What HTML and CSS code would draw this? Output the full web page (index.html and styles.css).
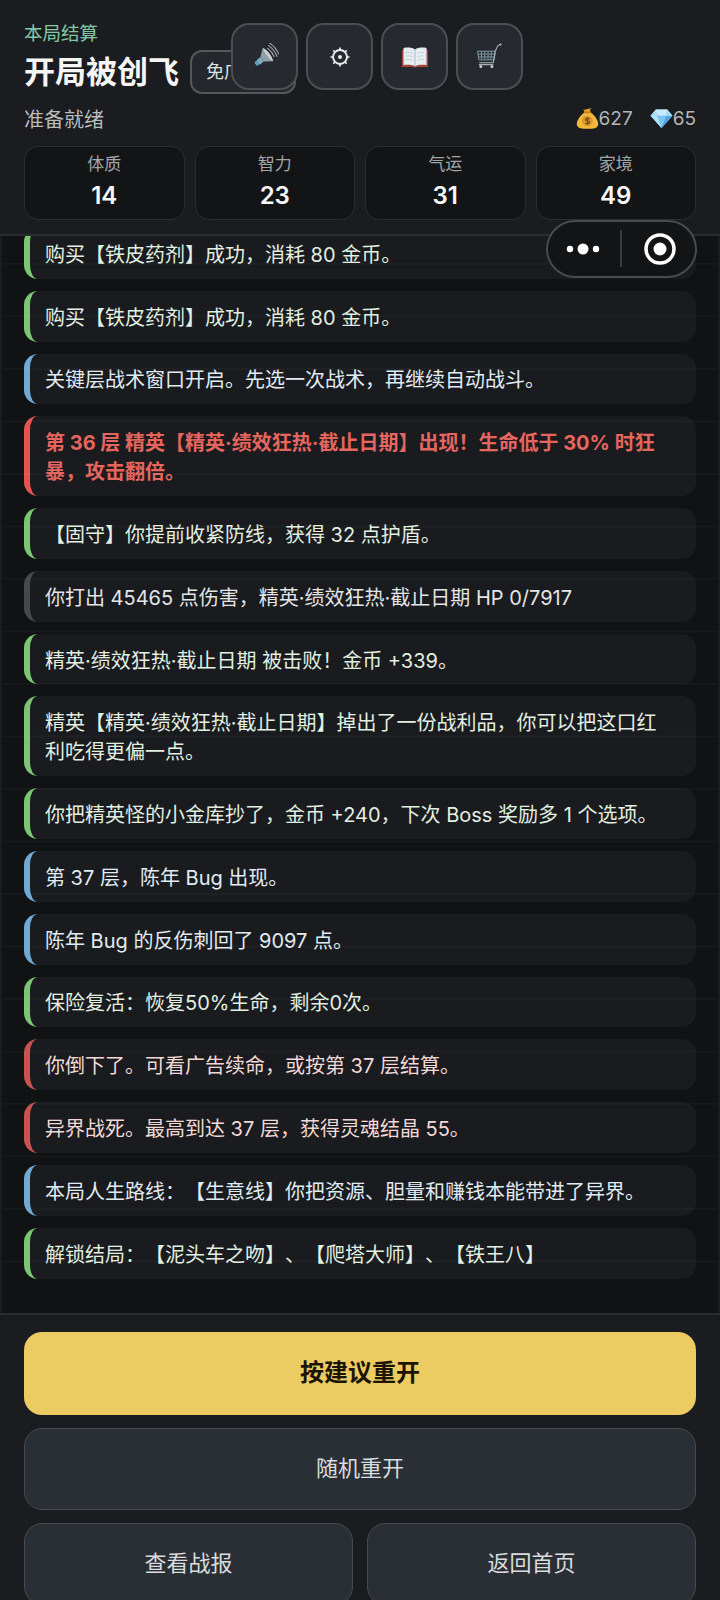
FILE: index.html
```html
<!DOCTYPE html>
<html lang="zh-CN">
<head>
    <meta charset="UTF-8">
    <meta name="viewport" content="width=device-width, initial-scale=1.0">
    <title>本局结算</title>
    <link rel="stylesheet" href="styles.css">
</head>
<body>
<div class="page">

    <header class="top">
        <div class="eyebrow">本局结算</div>
        <div class="title-row">
            <h1 class="title">开局被创飞</h1>
            <span class="badge">免广告券</span>
        </div>
        <div class="status-row">
            <span class="status">准备就绪</span>
            <div class="wallet">
                <span class="coin">
                    <svg width="23" height="23" viewBox="0 0 24 24">
                        <path d="M9 5.500 7.600 2.600c1.600.7 2.600.4 4-.4 1.200-.7 2.600-.7 4.800-.6l-2 1.400L15 5.600z" fill="#e8a52c"/>
                        <path d="M9.200 5.400c-4 2.600-8.400 8-8.400 12.200 0 3.600 3 5 6.600 5h9.400c3.600 0 6.400-1.400 6.400-5 0-4.200-4.400-9.600-8.400-12.200z" fill="#f0b93a"/>
                        <path d="M8.800 5.600h6.400" stroke="#c07f1e" stroke-width="1.600" stroke-linecap="round"/>
                        <circle cx="11.800" cy="14.600" r="5.600" fill="#d9962a"/>
                        <path d="M14 12.600c-.6-.9-3.800-1.200-4 .6-.2 2 4.400 1 4.200 3-.2 1.600-3.600 1.400-4.400.4M12 10.600v8" fill="none" stroke="#7a4a14" stroke-width="1.300"/>
                    </svg>
                </span><span class="num">627</span>
                <span class="coin gem">
                    <svg width="23" height="21" viewBox="0 0 24 22">
                        <path d="M6 1.500h12l5.500 6.500L12 21 .5 8z" fill="#8fd0f5"/>
                        <path d="M6 1.500h12L16.500 8h-9z" fill="#c9ecfc"/>
                        <path d="M.5 8h7L12 21z" fill="#b5e2fa"/>
                        <path d="M16.500 8h7L12 21z" fill="#4fa6e4"/>
                        <path d="M7.500 8h9L12 21z" fill="#7cc4f0"/>
                        <path d="M6 1.500 .5 8h7zM18 1.500 23.500 8h-7z" fill="#a9dcf8"/>
                    </svg>
                </span><span class="num">65</span>
            </div>
        </div>
        <div class="stats">
            <div class="stat"><span class="stat-label">体质</span><strong class="stat-value">14</strong></div>
            <div class="stat"><span class="stat-label">智力</span><strong class="stat-value">23</strong></div>
            <div class="stat"><span class="stat-label">气运</span><strong class="stat-value">31</strong></div>
            <div class="stat"><span class="stat-label">家境</span><strong class="stat-value">49</strong></div>
        </div>

        <!-- floating tool buttons sit on top of the title row -->
        <div class="tools">
            <button class="tool">
                <svg width="28" height="28" viewBox="0 0 30 30">
                    <g transform="rotate(-38 15 15)">
                        <path d="M3.500 12.500h4v5h-4a1.500 1.500 0 0 1-1-2.500 1.500 1.500 0 0 1 1-2.500z" fill="#5f9fb4"/>
                        <path d="M6 12h5v6H6z" fill="#7fabbc"/>
                        <path d="M11 12 19 6v18l-8-6z" fill="#8f9fa8"/>
                        <path d="M19 6c1.400 2 2 5.500 2 9s-.6 7-2 9c-1-2-1.400-5.500-1.400-9S18 8 19 6z" fill="#c9d0d4"/>
                        <g fill="none" stroke="#a9adb0" stroke-width="1.100" stroke-linecap="round">
                            <path d="M23 9.500c1 3.500 1 7.500 0 11"/>
                            <path d="M25.500 7.500c1.400 4.600 1.400 10.400 0 15"/>
                            <path d="M28 5.500c1.800 5.800 1.800 13.200 0 19"/>
                        </g>
                    </g>
                </svg>
            </button>
            <button class="tool">
                <svg width="22" height="22" viewBox="0 0 22 22">
                    <g stroke="#eceded" fill="none">
                        <circle cx="11" cy="11" r="7" stroke-width="1.900"/>
                        <path d="M11 1.500V4M11 18v2.500M1.500 11H4M18 11h2.500M4.300 4.300l1.700 1.700M16 16l1.700 1.700M4.300 17.700 6 16M16 6l1.700-1.700" stroke-width="1.700"/>
                    </g>
                    <circle cx="11" cy="11" r="2" fill="#eceded"/>
                </svg>
            </button>
            <button class="tool">
                <svg width="28" height="24" viewBox="0 0 28 24">
                    <path d="M1 5v17h11c1 .9 3 .9 4 0h11V5z" fill="#a5453c"/>
                    <path d="M2.500 3c4-.8 8.500-.6 11.500 1.500C17 2.400 21.500 2.200 25.500 3v17c-4-.6-8.500-.4-11.500 1.200C11 19.600 6.500 19.400 2.500 20z" fill="#e6edf1"/>
                    <path d="M14 4.500v16.700" stroke="#a9bcc9" stroke-width="1"/>
                    <path d="M5 7.500c2.500-.3 4.500 0 6.500.8M5 11c2.500-.3 4.500 0 6.500.8M5 14.500c2.500-.3 4.500 0 6.500.8M23 7.500c-2.500-.3-4.500 0-6.500.8M23 11c-2.500-.3-4.500 0-6.500.8M23 14.500c-2.500-.3-4.500 0-6.500.8" stroke="#c3d2dc" stroke-width="1" fill="none"/>
                </svg>
            </button>
            <button class="tool">
                <svg width="27" height="27" viewBox="0 0 28 28">
                    <g fill="none" stroke="#7f9aa5" stroke-width="1">
                        <path d="M1.500 8.500h18.500l-1.500 9H3z"/>
                        <path d="M2 11.500h17.500M2.500 14.500h16.500M5.500 8.500l.4 9M9 8.500l.2 9M12.500 8.500v9M16 8.500l-.5 9"/>
                    </g>
                    <path d="M20 8.500 22.500 3l3.500-1.800" fill="none" stroke="#a3b2b8" stroke-width="1.100"/>
                    <path d="M24.500 2l1.800-1" stroke="#d9a9a0" stroke-width="1.800"/>
                    <path d="M20 9 18 20.500H3.500" fill="none" stroke="#a9babf" stroke-width="1.100"/>
                    <path d="M3 22.500h15" stroke="#c3cbce" stroke-width="1.100"/>
                    <circle cx="5" cy="24.500" r="1.500" fill="#cfd6d8"/>
                    <circle cx="16.500" cy="24.500" r="1.500" fill="#cfd6d8"/>
                </svg>
            </button>
        </div>
    </header>

    <!-- wechat mini program capsule -->
    <div class="capsule">
        <svg width="151" height="58" viewBox="0 0 151 58">
            <circle cx="24" cy="29" r="3.200" fill="#fff"/>
            <circle cx="37" cy="29" r="5.500" fill="#fff"/>
            <circle cx="50" cy="29" r="3.200" fill="#fff"/>
            <path d="M75 10v37" stroke="#47484a" stroke-width="1.500"/>
            <circle cx="114" cy="29" r="14" fill="none" stroke="#fff" stroke-width="3.500"/>
            <circle cx="114" cy="29" r="6.500" fill="#fff"/>
        </svg>
    </div>

    <section class="log">
        <div class="log-list">
            <div class="entry good">购买【铁皮药剂】成功，消耗 80 金币。</div>
            <div class="entry good">购买【铁皮药剂】成功，消耗 80 金币。</div>
            <div class="entry info">关键层战术窗口开启。先选一次战术，再继续自动战斗。</div>
            <div class="entry boss">第 36 层 精英【精英·绩效狂热·截止日期】出现！生命低于 30% 时狂暴，攻击翻倍。</div>
            <div class="entry good">【固守】你提前收紧防线，获得 32 点护盾。</div>
            <div class="entry plain">你打出 45465 点伤害，精英·绩效狂热·截止日期 HP 0/7917</div>
            <div class="entry good">精英·绩效狂热·截止日期 被击败！金币 +339。</div>
            <div class="entry good">精英【精英·绩效狂热·截止日期】掉出了一份战利品，你可以把这口红利吃得更偏一点。</div>
            <div class="entry good">你把精英怪的小金库抄了，金币 +240，下次 Boss 奖励多 1 个选项。</div>
            <div class="entry info">第 37 层，陈年 Bug 出现。</div>
            <div class="entry info">陈年 Bug 的反伤刺回了 9097 点。</div>
            <div class="entry good">保险复活：恢复50%生命，剩余0次。</div>
            <div class="entry bad">你倒下了。可看广告续命，或按第 37 层结算。</div>
            <div class="entry bad">异界战死。最高到达 37 层，获得灵魂结晶 55。</div>
            <div class="entry info">本局人生路线：【生意线】你把资源、胆量和赚钱本能带进了异界。</div>
            <div class="entry good">解锁结局：【泥头车之吻】、【爬塔大师】、【铁王八】</div>
        </div>
    </section>

    <footer class="actions">
        <button class="btn primary">按建议重开</button>
        <button class="btn">随机重开</button>
        <div class="btn-row">
            <button class="btn">查看战报</button>
            <button class="btn">返回首页</button>
        </div>
    </footer>

</div>
</body>
</html>
```

FILE: styles.css
```css
* {
    box-sizing: border-box;
}

body {
    margin: 0;
    background-color: #1a1c1f;
    font-family: Inter, "Noto Sans CJK SC", sans-serif;
    text-spacing-trim: space-all;
}

button {
    font-family: inherit;
}

.page {
    position: relative;
    width: 720px;
    height: 1600px;
    overflow: hidden;
    display: flex;
    flex-direction: column;
}

/* Header */
.top {
    position: relative;
    flex-shrink: 0;
    height: 236px;
    padding: 20px 24px 0;
    border-bottom: 2px solid #2a2c2f;
}

.eyebrow {
    font-size: 18.500px;
    line-height: 26px;
    color: #84c9a6;
}

.title-row {
    display: flex;
    align-items: center;
    gap: 11px;
    height: 44px;
    margin-top: 4px;
}

.title {
    margin: 0;
    font-size: 31px;
    font-weight: 700;
    line-height: 40px;
    color: #f4f5f4;
}

.badge {
    width: 106px;
    height: 44px;
    padding: 0 14px;
    font-size: 18px;
    line-height: 40px;
    white-space: nowrap;
    color: #dfe2e3;
    background-color: #24282d;
    border: 2px solid #55585b;
    border-radius: 12px;
}

.status-row {
    display: flex;
    justify-content: space-between;
    align-items: center;
    height: 28px;
    margin-top: 10px;
}

.status {
    font-size: 20px;
    color: #b9bbbc;
}

.wallet {
    display: flex;
    align-items: center;
    font-size: 19px;
    color: #b3b6b8;
}

.coin {
    display: flex;
}

.gem {
    margin-left: 17px;
}

.stats {
    display: grid;
    grid-template-columns: repeat(4, 1fr);
    gap: 10px;
    margin-top: 14px;
}

.stat {
    display: flex;
    flex-direction: column;
    align-items: center;
    height: 74px;
    padding-top: 6px;
    background-color: #121416;
    border: 1.500px solid #2b2d30;
    border-radius: 14px;
}

.stat-label {
    font-size: 17px;
    line-height: 22px;
    color: #a3a5a7;
}

.stat-value {
    margin-top: 5px;
    font-size: 24px;
    font-weight: 600;
    line-height: 32px;
    color: #f6f7f6;
}

.tools {
    position: absolute;
    top: 23px;
    left: 231px;
    display: flex;
    gap: 8px;
}

.tool {
    display: flex;
    align-items: center;
    justify-content: center;
    width: 67px;
    height: 67px;
    padding: 0;
    background-color: #262a30;
    border: 2px solid #4c4f52;
    border-radius: 18px;
}

.capsule {
    position: absolute;
    top: 220px;
    left: 546px;
    z-index: 2;
    display: flex;
    width: 151px;
    height: 58px;
    background-color: #131416;
    box-shadow: inset 0 0 0 2px #4a4b4d;
    border-radius: 29px;
}

/* Battle log */
.log {
    position: relative;
    flex-shrink: 0;
    height: 1077px;
    overflow: hidden;
    background-color: #101214;
    margin: 0 2px;
}

/* faint scan lines running across the whole log */
.log::after {
    content: "";
    position: absolute;
    inset: 0;
    background-image: linear-gradient(rgba(255, 255, 255, 0.025) 2px, transparent 2px);
    background-size: 100% 52.500px;
    background-position: 0 27px;
    pointer-events: none;
}

.log-list {
    display: flex;
    flex-direction: column;
    gap: 12px;
    padding: 0 22px;
    margin-top: -8px;
}

.entry {
    padding: 12.900px 28px 8.900px 15px;
    font-size: 20px;
    line-height: 29px;
    background-color: #191b1e;
    border-left: 6px solid #7bc573;
    border-radius: 14px;
}

.good {
    color: #e2efe1;
    border-left-color: #7bc573;
}

.info {
    color: #e1ebf3;
    border-left-color: #6fa9d4;
}

.boss {
    font-weight: 700;
    color: #e5665f;
    border-left-color: #e5544e;
}

.plain {
    color: #e4e5e6;
    border-left-color: #45484d;
}

.bad {
    color: #f2d9d6;
    border-left-color: #c9544f;
}

/* Bottom actions */
.actions {
    flex-shrink: 0;
    display: flex;
    flex-direction: column;
    gap: 13px;
    padding: 17px 24px 0;
    border-top: 2px solid #2a2c2f;
}

.btn {
    flex: 1;
    flex-basis: 82px;
    flex-shrink: 0;
    height: 82px;
    padding-bottom: 7px;
    font-size: 22px;
    color: #dadcdd;
    background-color: #2a2f35;
    border: 1.500px solid #474b4f;
    border-radius: 18px;
}

.primary {
    flex-basis: 83px;
    height: 83px;
    font-size: 24px;
    font-weight: 700;
    color: #1c1404;
    background-color: #ebcb62;
    border: none;
}

.btn-row {
    flex-shrink: 0;
    display: grid;
    grid-template-columns: 1fr 1fr;
    gap: 14px;
}
```
